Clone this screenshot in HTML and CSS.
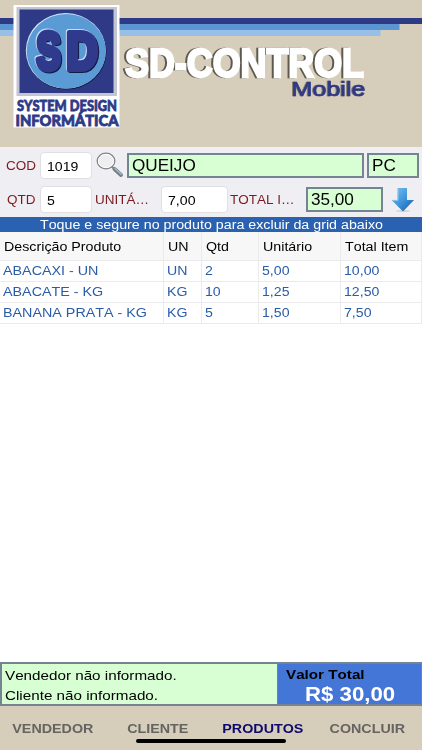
FILE: index.html
```html
<!DOCTYPE html>
<html lang="pt-BR">
<head>
    <meta charset="UTF-8">
    <meta name="viewport" content="width=device-width, initial-scale=1.0">
    <title>SD-Control Mobile</title>
    <link rel="stylesheet" href="styles.css">
</head>
<body>

    <header class="banner">
        <svg width="422" height="147" viewBox="0 0 422 147">
            <!-- faixas -->
            <rect x="0" y="18" width="422" height="6" fill="#2f3a86"/>
            <rect x="0" y="24" width="399.500" height="6" fill="#5b96d2"/>
            <rect x="0" y="30" width="380.500" height="6" fill="#98c0e6"/>
            <!-- logo -->
            <rect x="13.500" y="5" width="106" height="122.500" fill="#fff"/>
            <rect x="16.500" y="7" width="100.500" height="89" fill="#c3c5d3"/>
            <rect x="19.500" y="9.500" width="94" height="83.500" fill="#2f3a86"/>
            <ellipse cx="66.500" cy="52" rx="40" ry="37.500" fill="#10183f"/>
            <ellipse cx="65.800" cy="50.800" rx="40" ry="37.800" fill="#d5e6f6"/>
            <ellipse cx="66.300" cy="51.300" rx="39.600" ry="37.300" fill="#5b9bd5"/>
            <g class="logo-sd">
                <text x="36.500" y="68.500" textLength="24" lengthAdjust="spacingAndGlyphs">S</text>
                <text x="66.500" y="68.500" textLength="31" lengthAdjust="spacingAndGlyphs">D</text>
            </g>
            <g class="logo-nome">
                <text x="17" y="111.300" textLength="100" lengthAdjust="spacingAndGlyphs">SYSTEM DESIGN</text>
                <text x="15.500" y="126" textLength="103" lengthAdjust="spacingAndGlyphs">INFORMÁTICA</text>
            </g>
            <!-- título -->
            <text class="titulo" x="125" y="76.800" textLength="239" lengthAdjust="spacingAndGlyphs">SD-CONTROL</text>
            <text class="mobile" x="291.500" y="96.200" textLength="74" lengthAdjust="spacingAndGlyphs">Mobile</text>
        </svg>
    </header>

    <section class="form">
        <div class="linha">
            <label class="rotulo cod"><span>COD</span></label>
            <div class="campo c-cod"><span>1019</span></div>
            <svg class="lupa" width="28" height="26" viewBox="0 0 28 26">
                <path d="M15.500 14.500 L19 17.500" stroke="#85888a" stroke-width="2"/>
                <path d="M18.500 17 L25 23" stroke="#70838c" stroke-width="4" stroke-linecap="round"/>
                <path d="M19 16.500 L25.300 22.200" stroke="#a9bbc2" stroke-width="1.300" stroke-linecap="round"/>
                <ellipse cx="10" cy="9" rx="8.800" ry="7.800" fill="#eceef0" stroke="#858585" stroke-width="1.300"/>
                <ellipse cx="10" cy="9" rx="7.600" ry="6.600" fill="none" stroke="#fff" stroke-width="1"/>
            </svg>
            <div class="verde produto"><span>QUEIJO</span></div>
            <div class="verde unidade"><span>PC</span></div>
        </div>
        <div class="linha">
            <label class="rotulo qtd"><span>QTD</span></label>
            <div class="campo c-qtd"><span>5</span></div>
            <label class="rotulo unit"><span>UNITÁ…</span></label>
            <div class="campo c-unit"><span>7,00</span></div>
            <label class="rotulo total"><span>TOTAL I…</span></label>
            <div class="verde v-total"><span>35,00</span></div>
            <svg class="seta" width="24" height="26" viewBox="0 0 24 26">
                <defs>
                    <linearGradient id="azul" x1="0" y1="0" x2="1" y2="1">
                        <stop offset="0" stop-color="#7cc4ef"/>
                        <stop offset="0.500" stop-color="#3f96dc"/>
                        <stop offset="1" stop-color="#1c55a8"/>
                    </linearGradient>
                </defs>
                <ellipse cx="12" cy="25" rx="7" ry="1" fill="#d2d4da"/>
                <path d="M6.500 2 H16 V14 H23 L12 25.500 L0.500 14 H6.500 Z" fill="url(#azul)"/>
                <path d="M1.500 14.300 H7 V2.500" fill="none" stroke="#9fd4f2" stroke-width="0.800"/>
            </svg>
        </div>
    </section>

    <div class="aviso"><span>Toque e segure no produto para excluir da grid abaixo</span></div>

    <main class="grid">
        <table>
            <colgroup>
                <col class="col-desc"><col class="col-un"><col class="col-qtd"><col class="col-unit"><col class="col-total">
            </colgroup>
            <thead>
                <tr>
                    <th><span>Descrição Produto</span></th>
                    <th><span>UN</span></th>
                    <th><span>Qtd</span></th>
                    <th><span>Unitário</span></th>
                    <th><span>Total Item</span></th>
                </tr>
            </thead>
            <tbody>
                <tr>
                    <td><span>ABACAXI - UN</span></td>
                    <td><span>UN</span></td>
                    <td><span>2</span></td>
                    <td><span>5,00</span></td>
                    <td><span>10,00</span></td>
                </tr>
                <tr>
                    <td><span>ABACATE - KG</span></td>
                    <td><span>KG</span></td>
                    <td><span>10</span></td>
                    <td><span>1,25</span></td>
                    <td><span>12,50</span></td>
                </tr>
                <tr>
                    <td><span>BANANA PRATA - KG</span></td>
                    <td><span>KG</span></td>
                    <td><span>5</span></td>
                    <td><span>1,50</span></td>
                    <td><span>7,50</span></td>
                </tr>
            </tbody>
        </table>
    </main>

    <section class="resumo">
        <div class="info">
            <p><span>Vendedor não informado.</span></p>
            <p><span>Cliente não informado.</span></p>
        </div>
        <div class="valor">
            <p class="valor-titulo"><span>Valor Total</span></p>
            <p class="valor-total"><span>R$ 30,00</span></p>
        </div>
    </section>

    <nav class="abas">
        <a class="aba"><span>VENDEDOR</span></a>
        <a class="aba"><span>CLIENTE</span></a>
        <a class="aba ativa"><span>PRODUTOS</span></a>
        <a class="aba"><span>CONCLUIR</span></a>
        <div class="home"></div>
    </nav>

</body>
</html>
```
FILE: styles.css
```css
* {
    box-sizing: border-box;
}
body {
    margin: 0;
    height: 750px;
    display: flex;
    flex-direction: column;
    overflow: hidden;
    background-color: #fff;
    color: #000;
    font-family: "Liberation Sans", Arial, sans-serif;
    font-size: 12.5px;
    font-kerning: none;
}
p {
    margin: 0;
}
/* texto mais largo que o normal */
span {
    display: inline-block;
    white-space: nowrap;
    transform: scaleX(1.13);
    transform-origin: left center;
}

.banner {
    height: 147px;
    background-color: #d6cdba;
}
.banner svg {
    display: block;
}
.logo-sd {
    font-size: 51px;
    font-weight: bold;
    fill: #2f3a8c;
    stroke: #2f3a8c;
    stroke-width: 6;
    stroke-linejoin: round;
    filter: drop-shadow(-0.8px -0.6px 0 #c9dff3) drop-shadow(1px 1px 0 #141a40);
}
.logo-nome {
    font-family: Lato, sans-serif;
    font-size: 15.5px;
    font-weight: 900;
    fill: #2f3a86;
    stroke: #2f3a86;
    stroke-width: 0.8;
}
.titulo {
    font-size: 41px;
    font-weight: bold;
    fill: #fff;
    stroke: #fff;
    stroke-width: 2.4;
    filter: drop-shadow(-1.1px 0.7px 0.7px rgba(43, 38, 32, 0.7));
}
.mobile {
    font-size: 20.5px;
    fill: #2f3a86;
    stroke: #2f3a86;
    stroke-width: 0.7;
    filter: drop-shadow(-0.8px 0.7px 0.5px rgba(43, 38, 32, 0.5));
}

.form {
    height: 70px;
    padding-top: 1px;
    background-color: #efeef3;
}
.linha {
    display: flex;
    align-items: center;
    height: 34px;
}
.rotulo {
    color: #7c1a1e;
    padding: 2px 0 0 6px;
    flex: none;
}
.rotulo span {
    transform: scaleX(1.08);
}
.cod, .qtd {
    width: 40px;
}
.qtd {
    padding-left: 7px;
}
.unit {
    width: 69px;
    padding-left: 3px;
}
.total {
    width: 78px;
    padding-left: 2px;
}
.campo {
    flex: none;
    height: 27px;
    padding: 2px 0 0 6px;
    border: 1px solid #dfdfe4;
    border-radius: 4px;
    background-color: #fff;
    line-height: 25px;
}
.c-cod, .c-qtd {
    width: 52px;
}
.c-unit {
    width: 67px;
}
.lupa {
    margin: 0 3px 0 4px;
}
.verde {
    flex: none;
    height: 25px;
    padding-left: 3px;
    border: 2px solid #748490;
    background-color: #d7ffd3;
    font-size: 16px;
    line-height: 21px;
}
.verde span {
    transform: scaleX(1.07);
}
.produto {
    width: 237px;
}
.unidade {
    width: 52px;
    margin-left: 3px;
}
.v-total {
    width: 77px;
}
.seta {
    margin-left: 8px;
}

.aviso {
    height: 15px;
    background-color: #2a61b0;
    color: #fff;
    line-height: 17px;
    text-align: center;
}
.aviso span {
    transform: scaleX(1.14);
    transform-origin: center;
}

.grid {
    flex: 1;
}
table {
    width: 422px;
    table-layout: fixed;
    border-collapse: separate;
    border-spacing: 0;
}
.col-desc {
    width: 164px;
}
.col-un {
    width: 38px;
}
.col-qtd {
    width: 57px;
}
.col-unit {
    width: 82px;
}
th, td {
    padding: 0 0 0 3px;
    border-right: 1px solid #ebebed;
    border-bottom: 1px solid #ebebed;
    text-align: left;
    font-weight: normal;
    line-height: 20px;
}
th {
    height: 29px;
    padding: 2px 0 0 4px;
    background-color: #f7f7f7;
}
th span {
    transform: scaleX(1.14);
}
td {
    height: 21px;
    color: #2a5ca8;
}
td:first-child span {
    transform: scaleX(1.145);
}

.resumo {
    display: flex;
    height: 44px;
    border: 2px solid #748490;
    border-right-width: 1px;
    font-size: 13px;
}
.info {
    width: 276px;
    padding-left: 3px;
    border-right: 1px solid #748490;
    background-color: #d7ffd3;
    line-height: 20px;
}
.info span {
    transform: scaleX(1.17);
}
.info p:first-child {
    padding-top: 2px;
}
.valor {
    flex: 1;
    padding-left: 8px;
    background-color: #4476d8;
    font-weight: bold;
}
.valor-titulo {
    height: 20px;
    line-height: 22px;
}
.valor-titulo span {
    transform: scaleX(1.17);
}
.valor-total {
    padding-left: 19px;
    color: #fff;
    font-size: 19.5px;
    line-height: 21px;
}
.valor-total span {
    transform: scaleX(1.14);
}

.abas {
    position: relative;
    display: flex;
    height: 44px;
    background-color: #d6cdba;
}
.aba {
    width: 105px;
    color: #666460;
    font-size: 13px;
    font-weight: bold;
    line-height: 45px;
    text-align: center;
}
.aba span {
    transform: scaleX(1.1);
    transform-origin: center;
}
.ativa {
    color: #0d0a6b;
}
.home {
    position: absolute;
    left: 136px;
    bottom: 7px;
    width: 150px;
    height: 4px;
    border-radius: 2px;
    background-color: #000;
}
```
